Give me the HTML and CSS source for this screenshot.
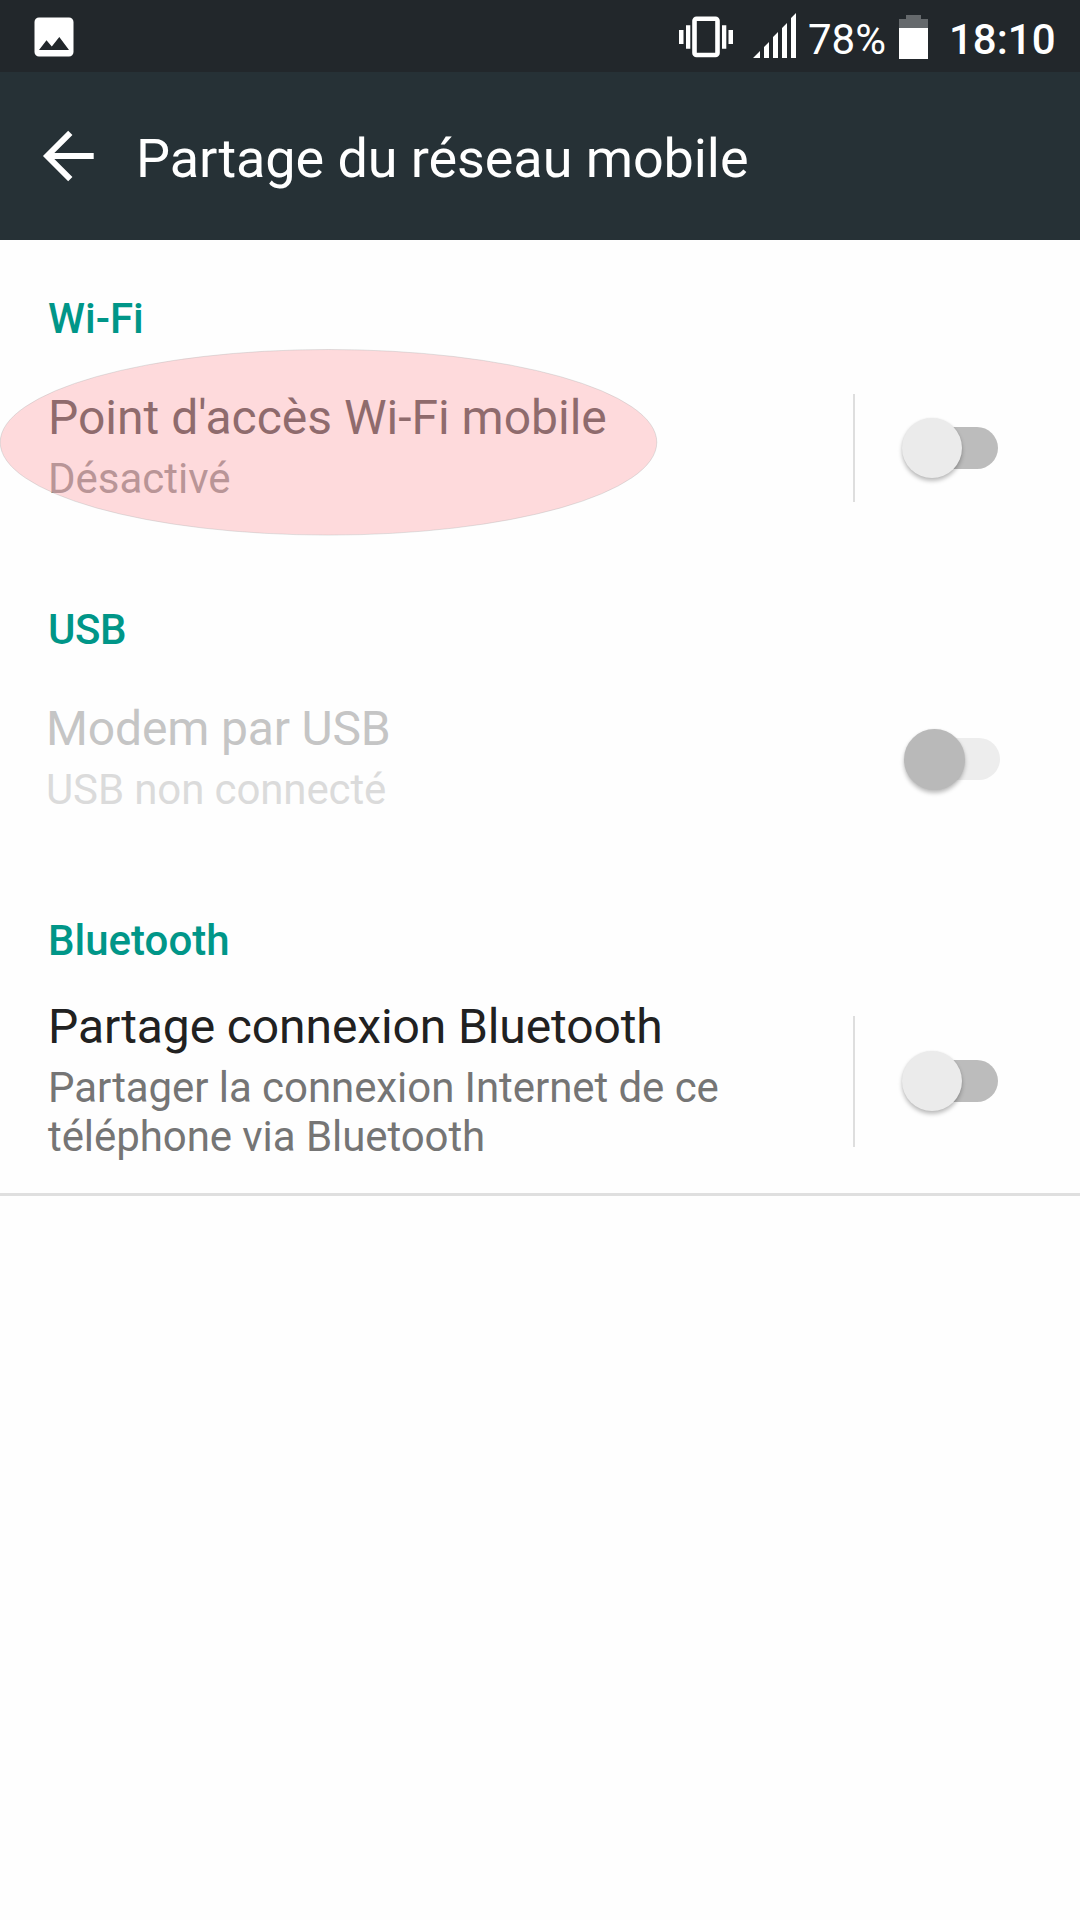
FILE: index.html
```html
<!DOCTYPE html>
<html lang="fr">
<head>
<meta charset="utf-8">
<title>Partage du réseau mobile</title>
<link rel="stylesheet" href="styles.css">
</head>
<body>
<div class="status-bar">
  <svg class="status-photo" width="40" height="40" viewBox="0 0 40 40">
    <path fill="#fff" fill-rule="evenodd" d="M5 .5h30a4.500 4.500 0 0 1 4.500 4.500v30a4.500 4.500 0 0 1-4.500 4.500H5A4.500 4.500 0 0 1 .5 35V5A4.500 4.500 0 0 1 5 .5zM5 33h30L25.300 20 17.800 29.500 12.500 23.300z"/>
  </svg>
  <div class="status-right">
    <svg class="status-vibrate" width="54" height="42" viewBox="0 0 54 42">
      <rect x="15.500" y="2.700" width="23" height="36.300" rx="2" fill="none" stroke="#fff" stroke-width="4.600"/>
      <path fill="#fff" d="M0 14h4.500v14H0zM7 9.300h4.300v23.400H7zM43 9.300h4.300v23.400H43zM49.500 14H54v14h-4.500z"/>
    </svg>
    <svg class="status-signal" width="43" height="45" viewBox="0 0 43 45">
      <path fill="#fff" d="M0 45l7-7v7zM11 45V34l5-5v16zM20 45V24l5-5v26zM29 45V15l5-5v35zM38 45V5l5-5v45z"/>
    </svg>
    <span class="status-percent">78%</span>
    <svg class="status-battery" width="29" height="44" viewBox="0 0 29 44">
      <path fill="#65696c" d="M7 0h15v4h7v9H0V4h7z"/>
      <path fill="#fff" d="M0 13h29v31H0z"/>
    </svg>
    <span class="status-clock">18:10</span>
  </div>
</div>
<header class="app-bar">
  <svg class="back" width="52" height="52" viewBox="0 0 52 52">
    <path d="M51.700 26H5.200M28.300 2.900 5.200 26l23.100 23.100" fill="none" stroke="#fff" stroke-width="6"/>
  </svg>
  <h1 class="app-title">Partage du réseau mobile</h1>
</header>
<main class="settings">
  <section class="group">
    <h2 class="group-title">Wi-Fi</h2>
    <div class="row">
      <div class="row-text">
        <div class="label">Point d'accès Wi-Fi mobile</div>
        <div class="summary">Désactivé</div>
      </div>
      <div class="divider"></div>
      <div class="switch"><div class="thumb"></div></div>
      <svg class="highlight" width="658" height="187" viewBox="0 0 658 187">
        <ellipse cx="328.500" cy="93.300" rx="328.300" ry="92.800"/>
      </svg>
    </div>
  </section>
  <section class="group">
    <h2 class="group-title usb-title">USB</h2>
    <div class="row disabled">
      <div class="row-text">
        <div class="label">Modem par USB</div>
        <div class="summary">USB non connecté</div>
      </div>
      <div class="switch"><div class="thumb"></div></div>
    </div>
  </section>
  <section class="group last">
    <h2 class="group-title">Bluetooth</h2>
    <div class="row tall">
      <div class="row-text">
        <div class="label">Partage connexion Bluetooth</div>
        <div class="summary">Partager la connexion Internet de ce téléphone via Bluetooth</div>
      </div>
      <div class="divider"></div>
      <div class="switch"><div class="thumb"></div></div>
    </div>
  </section>
</main>
</body>
</html>
```
FILE: styles.css
```css
* { box-sizing: border-box; }
body {
  margin: 0;
  min-height: 1920px;
  background: #fefefe;
  font-family: Roboto, sans-serif;
}
h1, h2 { margin: 0; }
svg { display: block; flex: none; }

.status-bar {
  height: 72px;
  padding: 0 24px 0 34px;
  display: flex;
  justify-content: space-between;
  align-items: flex-start;
  background: #22272b;
  color: #fff;
  font-size: 42px;
  line-height: 49px;
}
.status-photo { margin-top: 17px; }
.status-right { display: flex; align-items: flex-start; }
.status-vibrate { margin-top: 16px; }
.status-signal { margin: 13px 12px 0 20px; }
.status-percent { width: 79px; margin: 15px 12px 0 0; white-space: nowrap; }
.status-battery { margin-top: 15px; }
.status-clock { margin: 15px 0 0 21px; width: 107px; font-weight: 500; white-space: nowrap; }

.app-bar {
  height: 168px;
  padding-left: 42px;
  display: flex;
  background: #263036;
  background: #263136;
  color: #fff;
}
.back { margin-top: 58px; }
.app-title {
  margin: 55px 0 0 42px;
  font-size: 54px;
  font-weight: 400;
  line-height: 64px;
  letter-spacing: -.09px;
}

.settings { padding-top: 54px; }
.group { padding-bottom: 52px; }
.group.last { padding-bottom: 0; border-bottom: 3px solid #dfdfdf; }
.group-title {
  padding-left: 48px;
  color: #009688;
  font-size: 42px;
  font-weight: 500;
  line-height: 49px;
}
.usb-title { letter-spacing: -.4px; }
.row {
  position: relative;
  height: 210px;
  padding-left: 48px;
  display: flex;
  align-items: flex-start;
}
.row-text { width: 805px; padding: 47px 80px 0 0; }
.label { color: #212121; font-size: 48px; line-height: 56px; }
.summary { margin-top: 8px; color: #757575; font-size: 42px; line-height: 49px; }
.divider { width: 2px; height: 108px; margin-top: 51px; background: #dedede; }
.switch {
  display: flex;
  width: 92px;
  height: 42px;
  margin: 84px 0 0 51px;
  border-radius: 21px;
  background: #bcbcbc;
}
.thumb {
  width: 60px;
  height: 60px;
  margin: -9px 0 0 -4px;
  border-radius: 50%;
  background: #ebebeb;
  box-shadow: 0 3px 4px rgba(0, 0, 0, .26), 0 0 2px rgba(0, 0, 0, .06);
}

.disabled { padding-left: 46px; }
.disabled .row-text { width: 811px; }
.disabled .label { color: #c5c5c5; letter-spacing: -.15px; }
.disabled .summary { color: #dbdbdb; letter-spacing: -.12px; }
.disabled .switch { background: #ededed; }
.disabled .thumb { width: 61px; height: 61px; background: #b9b9b9; }

.tall { height: 228px; }
.tall .row-text { padding-top: 34px; }
.tall .label { letter-spacing: -.11px; }
.tall .summary { letter-spacing: -.07px; }
.tall .divider { height: 131px; }
.tall .switch { margin-top: 95px; }

.highlight { position: absolute; left: 0; top: 6px; }
.highlight ellipse {
  fill: rgba(254, 182, 186, .5);
  stroke: rgba(160, 170, 170, .3);
  stroke-width: 1;
}
```
